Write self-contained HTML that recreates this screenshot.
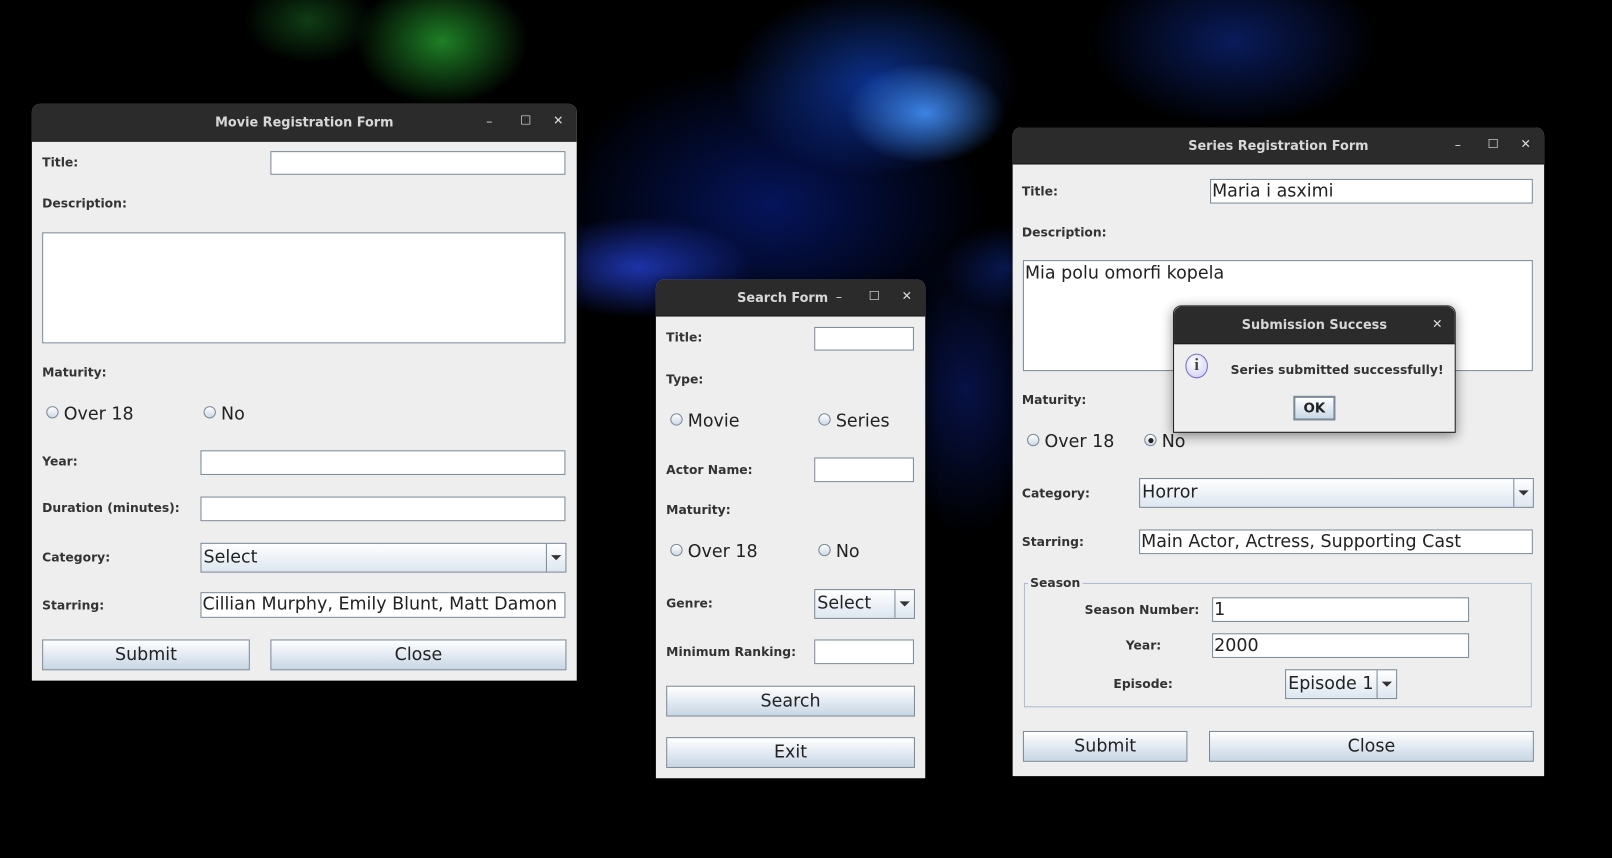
<!DOCTYPE html>
<html><head><meta charset="utf-8"><style>
html,body{margin:0;padding:0;width:1612px;height:858px;overflow:hidden;background:#000}
#s{position:absolute;left:0;top:0;width:1568px;height:835px;transform:scale(1.02806);transform-origin:0 0;
background:
radial-gradient(ellipse 120px 90px at 430px 40px,rgba(40,170,50,.75),transparent 70%),
radial-gradient(ellipse 90px 60px at 300px 20px,rgba(30,120,40,.5),transparent 70%),
radial-gradient(ellipse 110px 70px at 900px 110px,rgba(70,150,255,.85),transparent 70%),
radial-gradient(ellipse 200px 130px at 850px 80px,rgba(20,80,230,.6),transparent 70%),
radial-gradient(ellipse 160px 70px at 620px 260px,rgba(40,70,230,.7),transparent 70%),
radial-gradient(ellipse 300px 200px at 750px 200px,rgba(10,40,180,.5),transparent 70%),
radial-gradient(ellipse 120px 200px at 940px 380px,rgba(20,50,200,.35),transparent 70%),
radial-gradient(ellipse 160px 300px at 1090px 400px,rgba(10,40,180,.35),transparent 70%),
radial-gradient(ellipse 200px 120px at 1200px 40px,rgba(20,60,200,.45),transparent 70%),
radial-gradient(ellipse 90px 60px at 980px 260px,rgba(20,60,200,.4),transparent 70%),
#000;font-family:"DejaVu Sans","Liberation Sans",sans-serif}
.w{position:absolute;background:#eeeeee;box-shadow:0 2px 10px rgba(0,0,0,.6)}
.tb{position:absolute;left:0;right:0;top:0;background:#2b2b2b;border-radius:8px 8px 0 0;color:#d8d8d8;font-weight:bold;font-size:12.5px;text-align:center;border-bottom:1px solid #111}
.ctl{position:absolute;color:#ddd;font-size:12px}
.l{position:absolute;font-size:12px;font-weight:bold;color:#333;white-space:nowrap;line-height:16px}
.f{position:absolute;background:#fff;border:1px solid #7a8a99;box-sizing:border-box;font-size:17px;color:#222;line-height:22px;padding-left:1px;white-space:nowrap;overflow:hidden}
.b{position:absolute;box-sizing:border-box;border:1px solid #7a8a99;background:linear-gradient(#fff,#dde6f0 60%,#c9d6e4);font-size:17px;color:#222;text-align:center;}
.r{position:absolute;font-size:17px;color:#222;line-height:20px;white-space:nowrap}
.r i{display:inline-block;width:10px;height:10px;border:1px solid #7a8a99;border-radius:50%;background:linear-gradient(#fff,#cfd9e4);margin-right:5px;vertical-align:1px;position:relative}
.r i.on::after{content:"";position:absolute;left:2.5px;top:2.5px;width:5px;height:5px;border-radius:50%;background:#222}
.cb{position:absolute;box-sizing:border-box;border:1px solid #7a8a99;background:linear-gradient(#fff,#dde6f0);font-size:17px;color:#222;line-height:26px;padding-left:2px;white-space:nowrap}
.cb s{position:absolute;right:0;top:0;bottom:0;width:18px;border-left:1px solid #7a8a99;text-decoration:none}
.cb s::after{content:"";position:absolute;left:4px;top:11px;border:5px solid transparent;border-top:5px solid #333}
</style></head><body><div id="s">

<!-- Movie -->
<div class="w" style="left:31px;top:101px;width:530px;height:561px;border-radius:8px 8px 0 0">
<div class="tb" style="height:36px;line-height:36px">Movie Registration Form</div>
<div class="ctl" style="left:442px;top:10px">–</div><div class="ctl" style="left:475px;top:9px">☐</div><div class="ctl" style="left:507px;top:9px">✕</div>
</div>
<div class="l" style="left:41px;top:150px">Title:</div>
<div class="f" style="left:263px;top:147px;width:287px;height:23px"></div>
<div class="l" style="left:41px;top:190px">Description:</div>
<div class="f" style="left:41px;top:226px;width:509px;height:108px"></div>
<div class="l" style="left:41px;top:354px">Maturity:</div>
<div class="r" style="left:45px;top:393px"><i></i>Over 18</div>
<div class="r" style="left:198px;top:393px"><i></i>No</div>
<div class="l" style="left:41px;top:441px">Year:</div>
<div class="f" style="left:195px;top:438px;width:355px;height:24px"></div>
<div class="l" style="left:41px;top:486px">Duration (minutes):</div>
<div class="f" style="left:195px;top:483px;width:355px;height:24px"></div>
<div class="l" style="left:41px;top:534px">Category:</div>
<div class="cb" style="left:195px;top:528px;width:356px;height:29px">Select<s></s></div>
<div class="l" style="left:41px;top:581px">Starring:</div>
<div class="f" style="left:195px;top:576px;width:355px;height:25px">Cillian Murphy, Emily Blunt, Matt Damon</div>
<div class="b" style="left:41px;top:622px;width:202px;height:30px;line-height:28px">Submit</div>
<div class="b" style="left:263px;top:622px;width:288px;height:30px;line-height:28px">Close</div>

<!-- Search -->
<div class="w" style="left:638px;top:272px;width:262px;height:485px;border-radius:8px 8px 0 0">
<div class="tb" style="height:35px;line-height:35px;text-align:left;padding-left:79px">Search Form</div>
<div class="ctl" style="left:175px;top:10px">–</div><div class="ctl" style="left:207px;top:9px">☐</div><div class="ctl" style="left:239px;top:9px">✕</div>
</div>
<div class="l" style="left:648px;top:320px">Title:</div>
<div class="f" style="left:792px;top:318px;width:97px;height:23px"></div>
<div class="l" style="left:648px;top:361px">Type:</div>
<div class="r" style="left:652px;top:400px"><i></i>Movie</div>
<div class="r" style="left:796px;top:400px"><i></i>Series</div>
<div class="l" style="left:648px;top:449px">Actor Name:</div>
<div class="f" style="left:792px;top:445px;width:97px;height:24px"></div>
<div class="l" style="left:648px;top:488px">Maturity:</div>
<div class="r" style="left:652px;top:527px"><i></i>Over 18</div>
<div class="r" style="left:796px;top:527px"><i></i>No</div>
<div class="l" style="left:648px;top:579px">Genre:</div>
<div class="cb" style="left:792px;top:573px;width:98px;height:29px">Select<s></s></div>
<div class="l" style="left:648px;top:626px">Minimum Ranking:</div>
<div class="f" style="left:792px;top:622px;width:97px;height:24px"></div>
<div class="b" style="left:648px;top:667px;width:242px;height:30px;line-height:28px">Search</div>
<div class="b" style="left:648px;top:717px;width:242px;height:30px;line-height:28px">Exit</div>

<!-- Series -->
<div class="w" style="left:985px;top:124px;width:517px;height:631px;border-radius:8px 8px 0 0">
<div class="tb" style="height:35px;line-height:35px">Series Registration Form</div>
<div class="ctl" style="left:430px;top:10px">–</div><div class="ctl" style="left:462px;top:9px">☐</div><div class="ctl" style="left:494px;top:9px">✕</div>
</div>
<div class="l" style="left:994px;top:178px">Title:</div>
<div class="f" style="left:1177px;top:174px;width:314px;height:24px">Maria i asximi</div>
<div class="l" style="left:994px;top:218px">Description:</div>
<div class="f" style="left:995px;top:253px;width:496px;height:108px;padding:1px 0 0 1px">Mia polu omorfi kopela</div>
<div class="l" style="left:994px;top:381px">Maturity:</div>
<div class="r" style="left:999px;top:420px"><i></i>Over 18</div>
<div class="r" style="left:1113px;top:420px"><i class="on"></i>No</div>
<div class="l" style="left:994px;top:472px">Category:</div>
<div class="cb" style="left:1108px;top:465px;width:384px;height:29px">Horror<s></s></div>
<div class="l" style="left:994px;top:519px">Starring:</div>
<div class="f" style="left:1108px;top:515px;width:383px;height:24px">Main Actor, Actress, Supporting Cast</div>
<div style="position:absolute;left:996px;top:567px;width:494px;height:121px;border:1px solid #a8bcd4;box-sizing:border-box"></div>
<div class="l" style="left:1000px;top:559px;background:#eee;padding:0 2px">Season</div>
<div class="l" style="left:1055px;top:585px">Season Number:</div>
<div class="f" style="left:1179px;top:581px;width:250px;height:24px">1</div>
<div class="l" style="left:1095px;top:620px">Year:</div>
<div class="f" style="left:1179px;top:616px;width:250px;height:24px">2000</div>
<div class="l" style="left:1083px;top:657px">Episode:</div>
<div class="cb" style="left:1250px;top:651px;width:109px;height:29px">Episode 1<s></s></div>
<div class="b" style="left:995px;top:711px;width:160px;height:30px;line-height:28px">Submit</div>
<div class="b" style="left:1176px;top:711px;width:316px;height:30px;line-height:28px">Close</div>

<!-- Dialog -->
<div class="w" style="left:1141px;top:297px;width:275px;height:124px;border-radius:8px 8px 0 0;box-shadow:0 3px 12px rgba(0,0,0,.45);border:1px solid #222;box-sizing:border-box">
<div class="tb" style="height:36px;line-height:36px">Submission Success</div>
<div class="ctl" style="left:251px;top:10px">✕</div>
<div style="position:absolute;left:11px;top:46px;width:22px;height:24px;border-radius:50%;border:1px solid #7770c0;background:radial-gradient(circle at 40% 35%,#fff,#c9c9f4);box-sizing:border-box;text-align:center;color:#444;font:bold 16px 'Liberation Serif',serif;line-height:22px">i</div>
<div class="l" style="left:55px;top:54px">Series submitted successfully!</div>
<div class="b" style="left:116px;top:87px;width:41px;height:24px;line-height:22px;font-size:13px;font-weight:bold;border:2px solid #7a8a99">OK</div>
</div>

</div></body></html>
